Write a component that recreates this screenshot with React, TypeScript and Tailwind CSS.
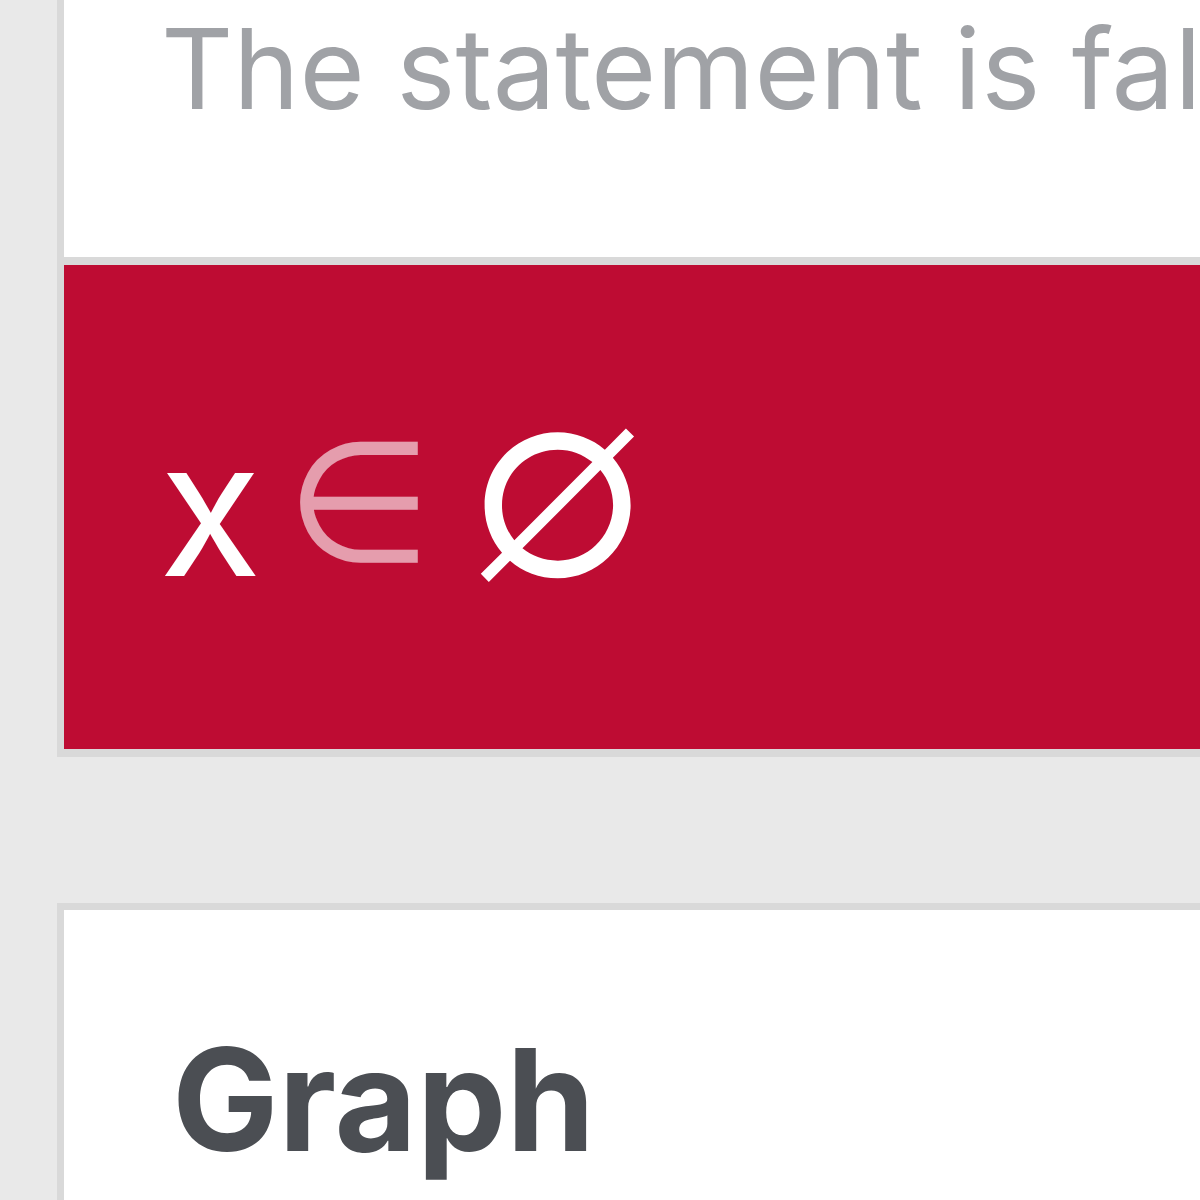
const App = () => {
  return (
    <div className="h-[1200px] w-[1200px] overflow-hidden bg-[#e9e9e9] pl-[57px] font-['Inter','Liberation_Sans',sans-serif]">
      <div className="flex w-[1300px] flex-col">
        {/* statement card */}
        <div className="border-b-[8px] border-l-[7px] border-[#d9d9d9]">
          <div className="h-[265px] border-b-[8px] border-[#d9d9d9] bg-white pl-[97px] pt-[12px]">
            <p className="whitespace-nowrap text-[112px] leading-none text-[#a0a2a6]">
              The statement is false
            </p>
          </div>
          <div className="flex h-[484px] items-center bg-[#be0c33] pl-[95px] text-white">
            <div className="mb-[50px] flex items-baseline text-[188px] leading-none">
              <span>x</span>
              <span className="ml-[24px] -translate-y-[15px] font-['DejaVu_Sans',sans-serif] text-[168px] text-white/60">∈</span>
              <span className="ml-[36px] text-[260px] font-light">∅</span>
            </div>
          </div>
        </div>

        {/* graph card */}
        <div className="mt-[146px] h-[400px] border-l-[7px] border-t-[7px] border-[#d9d9d9] bg-white pl-[108px] pt-[118px]">
          <h2 className="text-[142px] font-bold leading-none text-[#4b4e53]">Graph</h2>
        </div>
      </div>
    </div>
  )
}

export default App
